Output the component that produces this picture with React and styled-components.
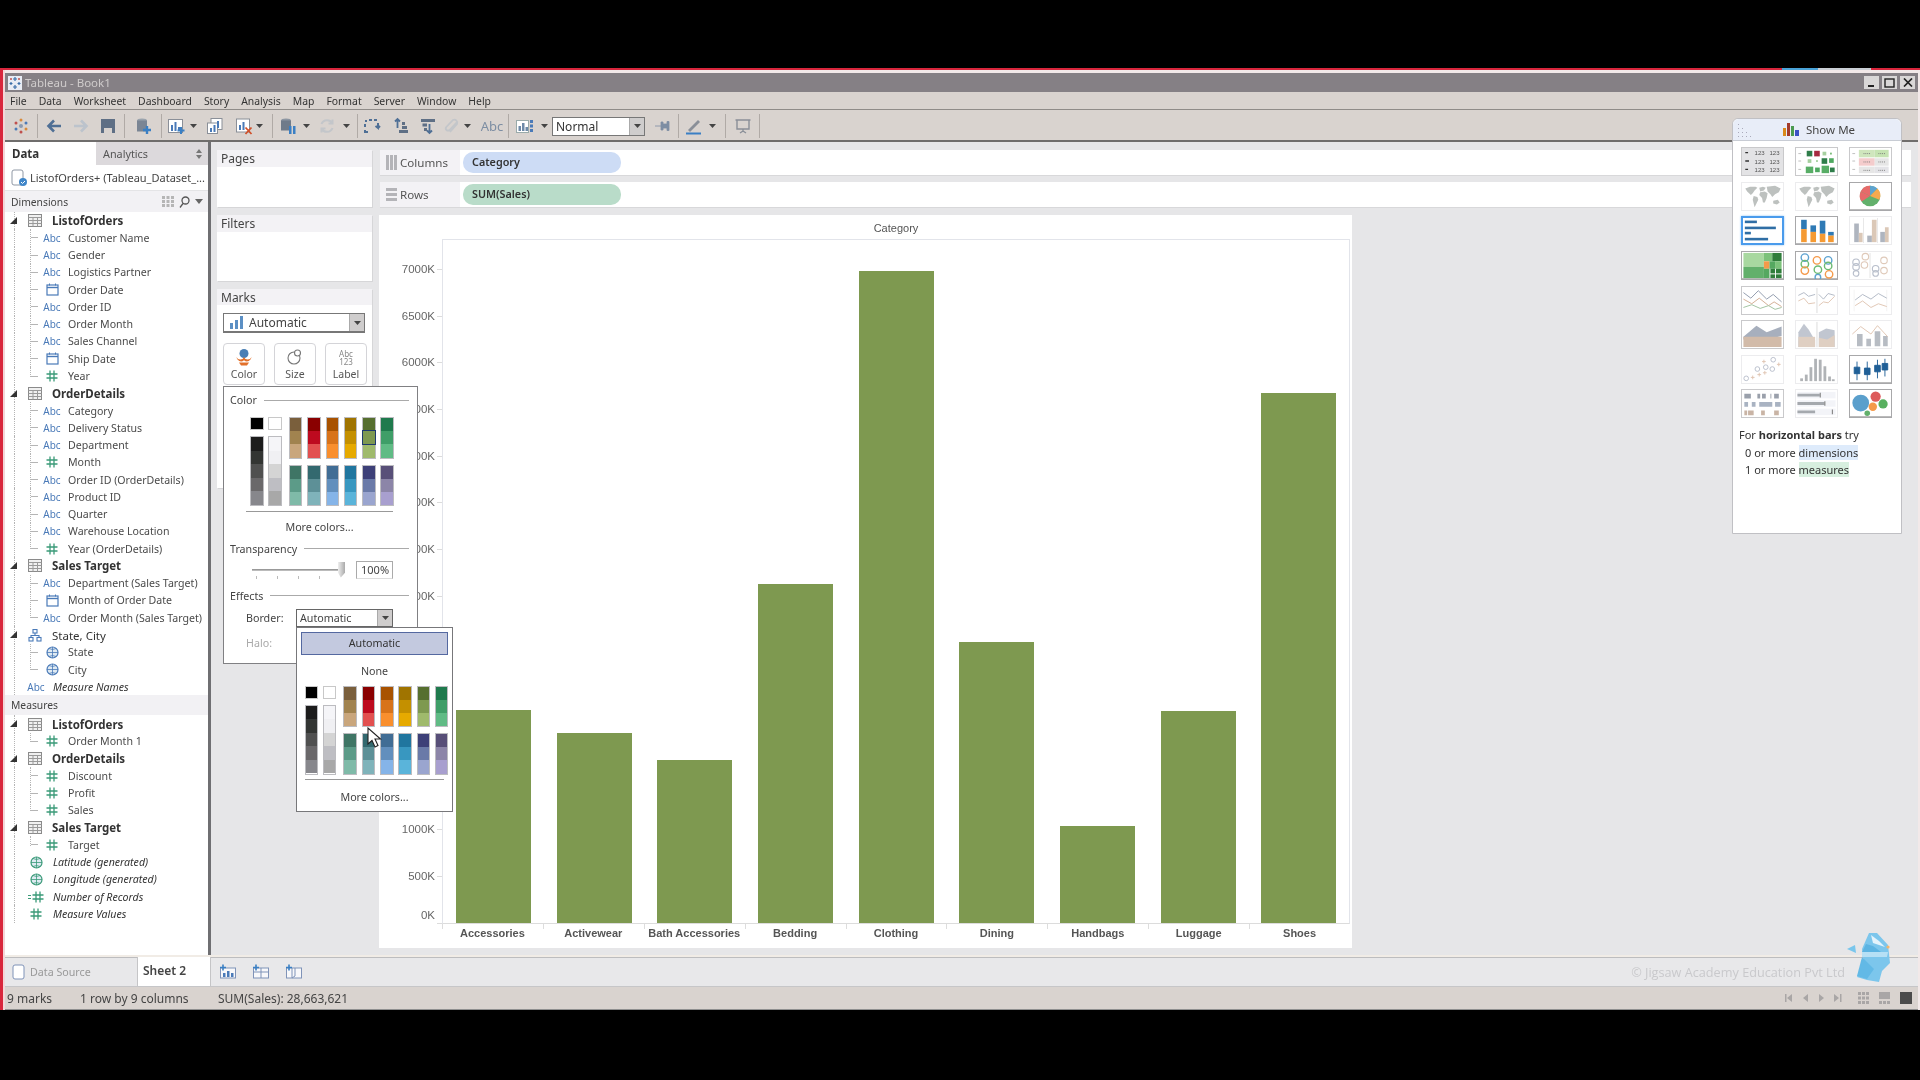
import styled, { createGlobalStyle } from "styled-components";

const GlobalStyle = createGlobalStyle`
  html, body { margin: 0; padding: 0; background: #000; }
  body { font-family: "Noto Sans", "Liberation Sans", sans-serif; color: #3c3c3c; }
  * { box-sizing: border-box; }
`;

const menus = ["File", "Data", "Worksheet", "Dashboard", "Story", "Analysis", "Map", "Format", "Server", "Window", "Help"];

const dimensions = [
  ["g", "table", "ListofOrders"],
  ["f", "abc", "Customer Name"],
  ["f", "abc", "Gender"],
  ["f", "abc", "Logistics Partner"],
  ["f", "date", "Order Date"],
  ["f", "abc", "Order ID"],
  ["f", "abc", "Order Month"],
  ["f", "abc", "Sales Channel"],
  ["f", "date", "Ship Date"],
  ["l", "hash", "Year"],
  ["g", "table", "OrderDetails"],
  ["f", "abc", "Category"],
  ["f", "abc", "Delivery Status"],
  ["f", "abc", "Department"],
  ["f", "hash", "Month"],
  ["f", "abc", "Order ID (OrderDetails)"],
  ["f", "abc", "Product ID"],
  ["f", "abc", "Quarter"],
  ["f", "abc", "Warehouse Location"],
  ["l", "hash", "Year (OrderDetails)"],
  ["g", "table", "Sales Target"],
  ["f", "abc", "Department (Sales Target)"],
  ["f", "date", "Month of Order Date"],
  ["l", "abc", "Order Month (Sales Target)"],
  ["h", "tree", "State, City"],
  ["f", "globe", "State"],
  ["l", "globe", "City"],
  ["t", "abc", "Measure Names"],
];

const measures = [
  ["g", "table", "ListofOrders"],
  ["l", "hash", "Order Month 1"],
  ["g", "table", "OrderDetails"],
  ["f", "hash", "Discount"],
  ["f", "hash", "Profit"],
  ["l", "hash", "Sales"],
  ["g", "table", "Sales Target"],
  ["l", "hash", "Target"],
  ["t", "globeGreen", "Latitude (generated)"],
  ["t", "globeGreen", "Longitude (generated)"],
  ["t", "hashEq", "Number of Records"],
  ["t", "hash", "Measure Values"],
];

const sales = [
  ["Accessories", 2280],
  ["Activewear", 2034],
  ["Bath Accessories", 1745],
  ["Bedding", 3630],
  ["Clothing", 6981],
  ["Dining", 3009],
  ["Handbags", 1039],
  ["Luggage", 2270],
  ["Shoes", 5675],
];

const ticks = [7000, 6500, 6000, 5500, 5000, 4500, 4000, 3500, 3000, 2500, 2000, 1500, 1000, 500, 0];

const paletteTop = [
  ["#7a5f3c", "#a1834f", "#c9a67c"],
  ["#8a0000", "#bd0a1f", "#e25050"],
  ["#a85200", "#d8731a", "#f98f2e"],
  ["#a07400", "#c49000", "#e6aa00"],
  ["#566f2f", "#7e9950", "#9fba6c"],
  ["#1f7a4d", "#3f9e68", "#60bb85"],
];
const paletteBottom = [
  ["#3f7565", "#5c9b88", "#7fbaa8"],
  ["#33696f", "#5d9097", "#7fb3ba"],
  ["#416d95", "#628fbd", "#85b4e8"],
  ["#20769f", "#3897c0", "#5ab4da"],
  ["#3d4078", "#6a7aa8", "#9aa5cf"],
  ["#584f78", "#8c85a8", "#a89fcf"],
];
const greyDark = ["#1c1c1c", "#333533", "#505050", "#6a686a", "#87878c"];
const greyLight = ["#f5f5f8", "#f0f0f3", "#d4d4d4", "#bebec3", "#a8a8a8"];

export default function App() {
  return (
    <Page>
      <GlobalStyle />
      <Window>
        <TitleBar>
          <AppLogo />
          <TitleText>Tableau - Book1</TitleText>
          <WinButtons>
            <WinButton>
              <svg width="9" height="9" viewBox="0 0 9 9"><rect x="1" y="7" width="6" height="2" fill="#222" /></svg>
            </WinButton>
            <WinButton>
              <svg width="11" height="10" viewBox="0 0 11 10"><rect x="1" y="1" width="9" height="8" fill="none" stroke="#222" strokeWidth="1.4" /></svg>
            </WinButton>
            <WinButton>
              <svg width="10" height="9" viewBox="0 0 10 9"><path d="M1 0.5l8 8M9 0.5l-8 8" stroke="#222" strokeWidth="1.7" /></svg>
            </WinButton>
          </WinButtons>
        </TitleBar>
        <MenuBar>
          {menus.map((m) => (
            <span key={m}>{m}</span>
          ))}
        </MenuBar>
        <Toolbar />
        <Main>
          <SidePanel />
          <Workspace>
            <CardsColumn>
              <Card $h={57}>
                <CardTitle>Pages</CardTitle>
              </Card>
              <Card $h={66}>
                <CardTitle>Filters</CardTitle>
              </Card>
              <MarksCard />
            </CardsColumn>
            <ViewColumn>
              <Shelf>
                <ShelfLabel>
                  <ColumnsGlyph />
                  Columns
                </ShelfLabel>
                <Pill $c="#cddcf5">Category</Pill>
              </Shelf>
              <Shelf>
                <ShelfLabel>
                  <RowsGlyph />
                  Rows
                </ShelfLabel>
                <Pill $c="#b9dcc9">SUM(Sales)</Pill>
              </Shelf>
              <Chart />
            </ViewColumn>
          </Workspace>
        </Main>
        <TabsBar>
          <SourceTab>
            <svg width="13" height="16" viewBox="0 0 13 16"><rect x="1" y="1" width="11" height="14" rx="2" fill="#fff" stroke="#7f93b8" /></svg>
            Data Source
          </SourceTab>
          <SheetTab>Sheet 2</SheetTab>
          <NewSheetIcons>
            <NewSheet kind="chart" />
            <NewSheet kind="dash" />
            <NewSheet kind="story" />
          </NewSheetIcons>
          <Watermark>© Jigsaw Academy Education Pvt Ltd</Watermark>
        </TabsBar>
        <StatusBar>
          <StatusText $w={73}>9 marks</StatusText>
          <StatusText $w={138}>1 row by 9 columns</StatusText>
          <StatusText $w={200}>SUM(Sales): 28,663,621</StatusText>
          <StatusRight>
            <NavIcons width="58" height="12" viewBox="0 0 58 12" fill="#a9a6a6">
              <path d="M1 2h1.500v8H1zM8 2v8L3 6zM24 2v8l-5-4zM35 2v8l5-4zM50 2v8l5-4zM56 2h1.500v8H56z" />
            </NavIcons>
            <svg width="11" height="12" viewBox="0 0 11 12" fill="#a9a6a6">
              <path d="M0 0h3v3H0zM4 0h3v3H4zM8 0h3v3H8zM0 4.500h3v3H0zM4 4.500h3v3H4zM8 4.500h3v3H8zM0 9h3v3H0zM4 9h3v3H4zM8 9h3v3H8z" />
            </svg>
            <svg width="11" height="12" viewBox="0 0 11 12" fill="#a9a6a6">
              <path d="M0 0h11v7H0zM0 9h3v3H0zM4 9h3v3H4zM8 9h3v3H8z" />
            </svg>
            <svg width="12" height="12" viewBox="0 0 12 12"><rect width="12" height="12" fill="#4b4b4b" /></svg>
          </StatusRight>
        </StatusBar>
        <ShowMe />
        <JigsawLogo />
      </Window>
    </Page>
  );
}

function AppLogo() {
  return (
    <svg width="14" height="14" viewBox="0 0 14 14">
      <rect width="14" height="14" fill="#e8ecf4" />
      <path d="M7 1v4M5 3h4M3 6v3M1.500 7.500h3M11 6v3M9.500 7.500h3M7 9v4M5 11h4" stroke="#3a6ea8" strokeWidth="1.200" />
      <path d="M3 2v2M2 3h2M11 2v2M10 3h2" stroke="#c0504d" strokeWidth="1" />
    </svg>
  );
}

function Caret() {
  return (
    <svg width="7" height="4" viewBox="0 0 7 4">
      <path d="M0 0h7L3.500 4z" fill="#444" />
    </svg>
  );
}

const toolIcons = {
  logo: (
    <g>
      <circle cx="9" cy="3" r="1.500" fill="#d98a3a" />
      <circle cx="4" cy="6" r="1.500" fill="#c0504d" />
      <circle cx="14" cy="6" r="1.500" fill="#4a7ab8" />
      <circle cx="4" cy="12" r="1.500" fill="#4a7ab8" />
      <circle cx="14" cy="12" r="1.500" fill="#d98a3a" />
      <circle cx="9" cy="15" r="1.500" fill="#c0504d" />
      <circle cx="9" cy="9" r="2" fill="#8a9ab0" />
    </g>
  ),
  back: <path d="M16 9H5M9 3.500L3.500 9 9 14.500" fill="none" stroke="#4f6f95" strokeWidth="2.600" />,
  forward: <path d="M2 9h11M9 3.500L14.500 9 9 14.500" fill="none" stroke="#bcc3cc" strokeWidth="2.600" />,
  save: <path d="M2 2h14v14H2zM5 11h8v5H5z" fill="#5f6f85" fillRule="evenodd" />,
  dataPlus: (
    <g>
      <ellipse cx="8" cy="3.500" rx="5" ry="2" fill="#9aa3ad" />
      <rect x="3" y="3.500" width="10" height="11" fill="#7a8594" />
      <path d="M13 9v8M9 13h8" stroke="#3a7fc4" strokeWidth="2.400" />
    </g>
  ),
  sheetPlus: (
    <g>
      <rect x="1.500" y="2.500" width="14" height="13" fill="#fff" stroke="#8a8f98" />
      <path d="M4 14V8h2v6zM7.500 14V5h2v9zM11 14v-4h2v4z" fill="#4a7ab8" />
      <path d="M14 10v7M10.500 13.500h7" stroke="#3a7fc4" strokeWidth="2" />
    </g>
  ),
  dup: (
    <g>
      <rect x="5" y="1.500" width="11" height="11" fill="#fff" stroke="#8a8f98" />
      <rect x="1.500" y="6" width="10" height="10.500" fill="#fff" stroke="#8a8f98" />
      <path d="M4 15v-4h2v4zM7.500 15V8h2v7zM11 11V4h2v7z" fill="#4a7ab8" />
    </g>
  ),
  clear: (
    <g>
      <rect x="1.500" y="2" width="13" height="13" fill="#fff" stroke="#8a8f98" />
      <path d="M4 13V8h2v5zM7.500 13V5h2v8z" fill="#4a7ab8" />
      <path d="M10.500 10.500l6 6.500M16.500 10.500l-6 6.500" stroke="#d0502a" strokeWidth="1.800" />
    </g>
  ),
  pause: (
    <g>
      <ellipse cx="7" cy="3.500" rx="5" ry="2" fill="#8d96a2" />
      <rect x="2" y="3.500" width="10" height="10" fill="#6f7b8a" />
      <path d="M10 9h2.500v8H10zM14 9h2.500v8H14z" fill="#3a7fc4" />
    </g>
  ),
  refresh: (
    <path d="M14.500 6.500A6 6 0 0 0 3.500 7M3.500 11.500A6 6 0 0 0 14.500 11M14.500 2.500v4h-4M3.500 15.500v-4h4" fill="none" stroke="#c3c6ca" strokeWidth="2" />
  ),
  swap: (
    <g fill="none" stroke="#4f6f95" strokeWidth="2">
      <path d="M2 4h2M6 3h3M11 3h3M2 7v3M2 13v2h3M15 6v5l-2.500-2M15 11l2-2" />
    </g>
  ),
  sortA: (
    <g>
      <path d="M4.500 2v9M2 4.500L4.500 2 7 4.500" fill="none" stroke="#4f6f95" strokeWidth="1.800" />
      <path d="M9 5h3v3H9zM9 9h5v3H9zM6 13h9v3H6z" fill="#5f6f85" />
    </g>
  ),
  sortD: (
    <g>
      <path d="M10.500 16V7M8 13.500l2.500 2.500 2.500-2.500" fill="none" stroke="#4f6f95" strokeWidth="1.800" />
      <path d="M2 2h14v3H2zM3.500 6.500H8v3H3.500zM5 11h3v3H5z" fill="#5f6f85" />
    </g>
  ),
  clip: (
    <path d="M15 5l-7.500 8a2.200 2.200 0 0 1-3.200-3L11 3a3 3 0 0 1 4 4l-7 8" fill="none" stroke="#c3c6ca" strokeWidth="1.800" />
  ),
  cards: (
    <g>
      <rect x="0.500" y="3.500" width="12" height="12" fill="#fff" stroke="#9aa" />
      <path d="M2.500 14V9H5v5zM6 14V6h2.500v8zM9.500 14v-4H12v4z" fill="#6d89a8" />
      <path d="M14 3h3v3h-3zM14 7.500h3v3h-3zM14 12h3v3h-3z" fill="#4a7ab8" />
    </g>
  ),
  pin: <path d="M2 9h6M8 5h2v8H8zM10 7h4v4h-4zM14 4.500h2v9h-2z" fill="#7d8ea3" stroke="#7d8ea3" strokeWidth="0.800" />,
  pen: (
    <g>
      <path d="M3 13L13 3l2 2L5 15z" fill="#8a8f98" />
      <path d="M1 16.500h15" stroke="#3a7fc4" strokeWidth="2" />
    </g>
  ),
  present: (
    <g fill="none" stroke="#8a8f98" strokeWidth="1.400">
      <path d="M1.500 3h15M3 3v9h12V3" />
      <path d="M9 12v2M6 16l3-2 3 2" />
    </g>
  ),
};

const toolbarItems = [
  ["logo", 32], ["sep"], ["back", 32], ["forward", 22], ["save", 32], ["sep"], ["dataPlus", 36], ["sep"],
  ["sheetPlus", 28], ["caret", 8], ["dup", 34], ["clear", 24], ["caret", 16], ["sep"],
  ["pause", 30], ["caret", 8], ["refresh", 32], ["caret", 14], ["sep"],
  ["swap", 28], ["sortA", 32], ["sortD", 20], ["clip", 26], ["caret", 12], ["abc", 32], ["sep"],
  ["cards", 32], ["caret", 8],
];

function ToolButton({ name, w }) {
  return (
    <ToolSlot $w={w}>
      <svg width="18" height="18" viewBox="0 0 18 18">{toolIcons[name]}</svg>
    </ToolSlot>
  );
}

function Toolbar() {
  return (
    <ToolbarRow>
      {toolbarItems.map(([name, w], i) => {
        if (name === "sep") return <ToolSep key={i} />;
        if (name === "caret")
          return (
            <CaretSlot key={i} $w={w}>
              <Caret />
            </CaretSlot>
          );
        if (name === "abc")
          return (
            <ToolSlot key={i} $w={w}>
              <AbcTool>Abc</AbcTool>
            </ToolSlot>
          );
        return <ToolButton key={i} name={name} w={w} />;
      })}
      <ToolSelect>
        Normal
        <SelectArrow $w={15}>
          <Caret />
        </SelectArrow>
      </ToolSelect>
      <ToolButton name="pin" w={33} />
      <ToolSep />
      <ToolButton name="pen" w={30} />
      <CaretSlot $w={16}>
        <Caret />
      </CaretSlot>
      <ToolSep />
      <ToolButton name="present" w={33} />
      <ToolSep />
    </ToolbarRow>
  );
}

function FieldIcon({ kind }) {
  if (kind === "abc") return <AbcIcon>Abc</AbcIcon>;
  if (kind === "table")
    return (
      <svg width="14" height="13" viewBox="0 0 14 13">
        <rect x="0.500" y="0.500" width="13" height="12" fill="#f0f0f0" stroke="#8a8a8a" />
        <path d="M0.500 3.500h13M0.500 6.500h13M0.500 9.500h13M5 3.500v9M9.500 3.500v9" stroke="#9a9a9a" />
      </svg>
    );
  if (kind === "date")
    return (
      <svg width="13" height="13" viewBox="0 0 13 13">
        <rect x="1" y="2" width="11" height="10" fill="#fff" stroke="#4a7ab8" strokeWidth="1.200" />
        <path d="M1 4.500h11" stroke="#4a7ab8" strokeWidth="1.400" />
        <path d="M3.500 0.500v2M9.500 0.500v2" stroke="#4a7ab8" />
      </svg>
    );
  if (kind === "hash" || kind === "hashEq")
    return (
      <svg width={kind === "hashEq" ? 16 : 12} height="12" viewBox={kind === "hashEq" ? "-4 0 16 12" : "0 0 12 12"}>
        <path d="M4 0.500v11M8 0.500v11M0.500 4h11M0.500 8h11" stroke="#3a9a78" strokeWidth="1.300" />
        {kind === "hashEq" && <path d="M-4 4.500h3M-4 7.500h3" stroke="#3a9a78" strokeWidth="1.200" />}
      </svg>
    );
  if (kind === "globe" || kind === "globeGreen") {
    const c = kind === "globe" ? "#4a7ab8" : "#3a9a78";
    return (
      <svg width="13" height="13" viewBox="0 0 13 13">
        <circle cx="6.500" cy="6.500" r="5.500" fill="#dfeaf2" stroke={c} strokeWidth="1.200" />
        <path d="M1 6.500h11M6.500 1v11M3 2.500q3.500 2 7 0M3 10.500q3.500-2 7 0" fill="none" stroke={c} strokeWidth="0.800" />
      </svg>
    );
  }
  return (
    <svg width="14" height="13" viewBox="0 0 14 13" fill="none" stroke="#4a7ab8" strokeWidth="1.100">
      <rect x="5" y="0.500" width="4" height="3.500" />
      <rect x="1" y="8.500" width="4" height="3.500" />
      <rect x="9" y="8.500" width="4" height="3.500" />
      <path d="M7 4v2.500H3v2M7 6.500h4v2" />
    </svg>
  );
}

function TreeRows({ rows }) {
  return rows.map(([type, icon, name], i) => {
    if (type === "g" || type === "h")
      return (
        <TreeRow key={i} $guide>
          <Twisty />
          <GroupIcon>
            <FieldIcon kind={icon} />
          </GroupIcon>
          <GroupName $plain={type === "h"}>{name}</GroupName>
        </TreeRow>
      );
    if (type === "t")
      return (
        <TreeRow key={i} $guide>
          <TopIcon>
            <FieldIcon kind={icon} />
          </TopIcon>
          <TopName>{name}</TopName>
        </TreeRow>
      );
    return (
      <FieldRow key={i} $last={type === "l"}>
        <ChildIcon>
          <FieldIcon kind={icon} />
        </ChildIcon>
        <span>{name}</span>
      </FieldRow>
    );
  });
}

function SidePanel() {
  return (
    <Side>
      <SideTabs>
        <DataTab>Data</DataTab>
        <AnalyticsTab>
          Analytics
          <svg width="6" height="10" viewBox="0 0 6 10" fill="#777">
            <path d="M3 0l3 4H0zM3 10L0 6h6z" />
          </svg>
        </AnalyticsTab>
      </SideTabs>
      <SourceRow>
        <svg width="17" height="18" viewBox="0 0 17 18">
          <rect x="1" y="1" width="11" height="15" rx="2" fill="#fff" stroke="#8f98a5" />
          <circle cx="12" cy="13" r="4" fill="#3f86c9" />
          <path d="M10 13l1.500 1.500L14 12" stroke="#fff" fill="none" />
        </svg>
        <SourceName>ListofOrders+ (Tableau_Dataset_...</SourceName>
      </SourceRow>
      <SectionHead $h={21}>
        Dimensions
        <SectionTools>
          <svg width="12" height="11" viewBox="0 0 12 11" fill="#b5b5b5">
            <path d="M0 0h3v3H0zM4.500 0h3v3h-3zM9 0h3v3H9zM0 4h3v3H0zM4.500 4h3v3h-3zM9 4h3v3H9zM0 8h3v3H0zM4.500 8h3v3h-3zM9 8h3v3H9z" />
          </svg>
          <svg width="11" height="12" viewBox="0 0 11 12" fill="none" stroke="#555" strokeWidth="1.300">
            <circle cx="6.500" cy="4.500" r="3.500" />
            <path d="M4 7.500L1 11.500" />
          </svg>
          <svg width="8" height="5" viewBox="0 0 8 5"><path d="M0 0h8L4 5z" fill="#666" /></svg>
        </SectionTools>
      </SectionHead>
      <TreeRows rows={dimensions} />
      <SectionHead $h={20}>Measures</SectionHead>
      <TreeRows rows={measures} />
    </Side>
  );
}

function PaletteColumn({ shades, selected }) {
  return (
    <Stripe>
      {shades.map((c, i) => (
        <Shade key={c} $c={c} $selected={selected === i} />
      ))}
    </Stripe>
  );
}

function Palette({ highlight }) {
  return (
    <PaletteWrap>
      <GreyPair>
        <GreyColumn>
          <Chip $c="#000" />
          <PaletteColumn shades={greyDark} />
        </GreyColumn>
        <GreyColumn>
          <Chip $c="#fff" />
          <PaletteColumn shades={greyLight} />
        </GreyColumn>
      </GreyPair>
      <ColorGrid>
        {paletteTop.map((s, i) => (
          <PaletteColumn key={i} shades={s} selected={highlight && i === 4 ? 1 : -1} />
        ))}
        {paletteBottom.map((s, i) => (
          <PaletteColumn key={i} shades={s} />
        ))}
      </ColorGrid>
    </PaletteWrap>
  );
}

function MarksCard() {
  return (
    <Card $h={199}>
      <CardTitle $tight>Marks</CardTitle>
      <MarkSelect>
        <svg width="14" height="13" viewBox="0 0 14 13" fill="#5b8fc4">
          <path d="M0 13V7h3v6zM5 13V4h3v9zM10 13V0h3v13z" />
        </svg>
        <MarkSelectText>Automatic</MarkSelectText>
        <SelectArrow $w={15}>
          <Caret />
        </SelectArrow>
      </MarkSelect>
      <MarkButtons>
        <MarkButton>
          <svg width="18" height="18" viewBox="0 0 18 18">
            <circle cx="9" cy="5.500" r="4.500" fill="#4a7fb5" />
            <path d="M1.500 9a4.500 4.500 0 0 0 7.500 3.300A4.500 4.500 0 0 0 16.500 9 4 4 0 0 1 9 9a4 4 0 0 1-7.500 0z" fill="#e2702a" />
            <path d="M4 14.500h10l-2 3H6z" fill="#e2702a" />
          </svg>
          Color
        </MarkButton>
        <MarkButton>
          <svg width="16" height="18" viewBox="0 0 16 18" fill="none" stroke="#777" strokeWidth="1.100">
            <circle cx="7" cy="10" r="6" />
            <circle cx="10.500" cy="5" r="3" fill="#fff" />
          </svg>
          Size
        </MarkButton>
        <MarkButton>
          <LabelGlyph>
            Abc
            <br />
            123
          </LabelGlyph>
          Label
        </MarkButton>
      </MarkButtons>
      <ColorPopup>
        <PopupHead>Color</PopupHead>
        <PaletteIndent>
          <Palette highlight />
        </PaletteIndent>
        <PopupRule $left={16} $right={16} $top={5} />
        <MoreColors $top={3.500}>More colors...</MoreColors>
        <PopupHead $top={4}>Transparency</PopupHead>
        <SliderRow>
          <SliderTrack>
            <SliderTicks>
              <i />
              <i />
              <i />
              <i />
            </SliderTicks>
            <SliderThumb />
          </SliderTrack>
          <PercentBox>100%</PercentBox>
        </SliderRow>
        <PopupHead $top={10}>Effects</PopupHead>
        <BorderRow>
          <BorderLabel>Border:</BorderLabel>
          <BorderSelect>
            Automatic
            <SelectArrow $w={15}>
              <Caret />
            </SelectArrow>
            <BorderPopup>
              <AutoChoice>Automatic</AutoChoice>
              <NoneChoice>None</NoneChoice>
              <BorderPaletteIndent>
                <Palette />
              </BorderPaletteIndent>
              <PopupRule $left={4} $right={4} $top={4} />
              <MoreColors $top={6}>More colors...</MoreColors>
              <CursorArrow width="15" height="22" viewBox="0 0 15 22">
                <path d="M1 1v16l4-3.500 3 6.500 3-1.500-3-6.500h5.500z" fill="#fff" stroke="#222" strokeWidth="1.100" />
              </CursorArrow>
            </BorderPopup>
          </BorderSelect>
        </BorderRow>
        <HaloRow>Halo:</HaloRow>
      </ColorPopup>
    </Card>
  );
}

function Chart() {
  const pxPerK = 654 / 7000;
  return (
    <ChartCard>
      <ChartHead>Category</ChartHead>
      <Axis>
        {ticks.map((t) => (
          <AxisTick key={t} $zero={t === 0}>
            <span>{t}K</span>
          </AxisTick>
        ))}
      </Axis>
      <Plot>
        {sales.map(([name, value]) => (
          <BarCell key={name}>
            <Bar style={{ height: value * pxPerK }} />
          </BarCell>
        ))}
      </Plot>
      <span />
      <XLabels>
        {sales.map(([name]) => (
          <XLabel key={name}>{name}</XLabel>
        ))}
      </XLabels>
    </ChartCard>
  );
}

function ColumnsGlyph() {
  return (
    <svg width="11" height="15" viewBox="0 0 11 15" fill="#b4b4b8">
      <path d="M0 0h3v15H0zM4 0h3v15H4zM8 0h3v15H8z" />
    </svg>
  );
}

function RowsGlyph() {
  return (
    <svg width="11" height="14" viewBox="0 0 11 14" fill="#b4b4b8">
      <path d="M0 0h11v3H0zM0 5h11v3H0zM0 10h11v3H0z" />
    </svg>
  );
}

function NewSheet({ kind }) {
  return (
    <svg width="17" height="15" viewBox="0 0 17 15">
      <rect x="1.500" y="4" width="15" height="10" fill="#f8f8fa" stroke="#7f93b8" />
      {kind === "chart" && <path d="M4 13V9h2.500v4zM8 13V7h2.500v6zM12 13V9h2.500v4z" fill="#4a7ab8" />}
      {kind === "dash" && <path d="M1.500 8h15M9 4v10" stroke="#7f93b8" />}
      {kind === "story" && <path d="M7 4v10M7 14l3-2V4" fill="none" stroke="#7f93b8" />}
      <path d="M4 0.500v6M1 3.500h6" stroke="#3a7fc4" strokeWidth="1.600" />
    </svg>
  );
}

function JigsawLogo() {
  return (
    <LogoMark width="44" height="50" viewBox="0 0 44 50">
      <path d="M15 17l7-16h8l11 12 2 18-8 8-3 11-12-2-10-3 7-13z" fill="#7cc6ec" />
      <path d="M24 3l8 6 6 6-12-4z" fill="#e4f3fb" />
      <path d="M19 12l7 2 8 6-19 0z" fill="#5cb4e2" />
      <path d="M15 20h26l-1 5H15z" fill="#b6e0f5" />
      <path d="M15 25l12 12-7 10-10-3z" fill="#62b9e6" />
      <path d="M0 17l8-4 1 8z" fill="#79c6ec" />
      <circle cx="41" cy="15" r="1.600" fill="#f2b56b" />
    </LogoMark>
  );
}

const ThumbSvg = ({ children }) => (
  <svg width="100%" height="100%" viewBox="0 0 43 29">
    {children}
  </svg>
);

const worldMap = (
  <path d="M3 6l5-2 6 0 2 1-3 3-2 3-2 2-2-2-2-2zM12 14l4 1 1 3-2 4-2 4-1-4-1-4zM18 5l4-1 3 1-2 3-4 1zM19 10l5-1 3 2-1 5-2 5-2 0-1-5-3-3zM26 4l9-1 6 3-2 4-4 2-3 3-2-3-3-3zM33 19l5-1 2 3-3 2-4-1z" fill="#a2a8a5" />
);

const thumbs = [
  ["mid", <g key="a" fontSize="6.500" fontFamily="Liberation Sans" fill="#555">
    <path d="M3 5h3M3 14h4M3 23h3" stroke="#333" strokeWidth="1.500" />
    <text x="13" y="8">123</text><text x="29" y="8">123</text>
    <text x="13" y="17">123</text><text x="29" y="17">123</text>
    <text x="13" y="26">123</text><text x="29" y="26">123</text>
  </g>, "#e3e3e5"],
  ["mid", <g key="b">
    <path d="M2 6h3M2 14h3M2 23h3" stroke="#bbb" />
    <rect x="11" y="3" width="6" height="6" fill="#2f7d4a" /><rect x="19" y="3" width="6" height="6" fill="#a52a40" /><rect x="28" y="4" width="4" height="4" fill="#a6d09f" /><rect x="36" y="5" width="2" height="2" fill="#7cbc7c" />
    <rect x="12" y="12" width="4" height="4" fill="#a6d09f" /><rect x="21" y="13" width="2" height="2" fill="#a6d09f" /><rect x="27" y="11" width="6" height="6" fill="#2f7d4a" /><rect x="35" y="11" width="5" height="5" fill="#4ea860" />
    <rect x="10" y="20" width="8" height="7" fill="#58ad66" /><rect x="20" y="21" width="5" height="5" fill="#4ea860" /><rect x="27" y="19" width="8" height="8" fill="#58ad66" /><rect x="36" y="21" width="5" height="5" fill="#2f7d4a" />
  </g>],
  ["mid", <g key="c">
    <path d="M2 6h3M2 14h3M2 23h3" stroke="#bbb" />
    <rect x="9" y="2" width="17" height="8" fill="#cfe6bd" /><rect x="26" y="2" width="15" height="8" fill="#c5e3b2" />
    <rect x="9" y="11" width="17" height="8" fill="#f4cccc" /><rect x="26" y="11" width="15" height="8" fill="#e6e6e6" />
    <rect x="9" y="20" width="17" height="7" fill="#e6e6e6" /><rect x="26" y="20" width="15" height="7" fill="#e4e4e8" />
    <path d="M14 6h8M30 6h8M14 15h8M30 15h8M14 24h8M30 24h8" stroke="#7a7a7a" strokeDasharray="1 1" />
  </g>],
  ["off", <g key="d">{worldMap}</g>],
  ["off", <g key="e">{worldMap}</g>],
  ["on", <g key="f">
    <circle cx="21" cy="14" r="11" fill="#62b06b" />
    <path d="M21 14L11 9a11 11 0 0 1 10-6z" fill="#e66a6a" /><path d="M21 14L12 20a11 11 0 0 1-1-11z" fill="#e66a6a" />
    <path d="M21 14V3a11 11 0 0 1 8 3z" fill="#5ea3d0" /><path d="M21 14l8-8a11 11 0 0 1 2 12z" fill="#f5a94e" />
  </g>],
  ["sel", <g key="g" fill="#2f6ea5">
    <rect x="1" y="3" width="14" height="3" /><rect x="1" y="10" width="36" height="3" /><rect x="1" y="16" width="7" height="3" /><rect x="1" y="23" width="27" height="3" />
  </g>],
  ["on", <g key="h">
    <rect x="5" y="3" width="6" height="10" fill="#2f7ab5" /><rect x="5" y="13" width="6" height="14" fill="#f59a33" />
    <rect x="15" y="9" width="6" height="7" fill="#2f7ab5" /><rect x="15" y="16" width="6" height="11" fill="#f59a33" />
    <rect x="25" y="4" width="6" height="14" fill="#2f7ab5" /><rect x="25" y="18" width="6" height="9" fill="#f59a33" />
    <rect x="34" y="16" width="6" height="4" fill="#2f7ab5" /><rect x="34" y="20" width="6" height="7" fill="#f59a33" />
  </g>],
  ["off", <g key="i">
    <path d="M14 1v27M29 1v27" stroke="#ddd" />
    <rect x="4" y="7" width="5" height="20" fill="#8e96a4" /><rect x="9" y="17" width="4" height="10" fill="#cdb19a" />
    <rect x="18" y="20" width="5" height="7" fill="#8e96a4" /><rect x="23" y="3" width="5" height="24" fill="#cdb19a" />
    <rect x="32" y="16" width="5" height="11" fill="#8e96a4" /><rect x="37" y="11" width="4" height="16" fill="#cdb19a" />
  </g>],
  ["on", <g key="j">
    <rect x="1" y="1" width="22" height="15" fill="#a8d8a0" /><rect x="23" y="1" width="9" height="9" fill="#7cc27a" /><rect x="32" y="1" width="10" height="9" fill="#2f7d3a" />
    <rect x="23" y="10" width="6" height="8" fill="#f59a4a" /><rect x="29" y="10" width="6" height="8" fill="#55a860" /><rect x="35" y="10" width="7" height="8" fill="#7cc27a" />
    <rect x="1" y="16" width="22" height="12" fill="#62b06b" /><rect x="23" y="18" width="6" height="10" fill="#55a860" /><rect x="30" y="18" width="5" height="5" fill="#2f7d3a" /><rect x="36" y="18" width="6" height="5" fill="#2f7d3a" /><rect x="30" y="24" width="5" height="4" fill="#2f7d3a" /><rect x="36" y="24" width="6" height="4" fill="#2f7d3a" />
  </g>],
  ["on", <g key="k" fill="none" strokeWidth="1.500">
    <circle cx="9" cy="6" r="4" stroke="#5ea3d0" /><circle cx="22" cy="9" r="4" stroke="#f59a4a" /><circle cx="34" cy="9" r="4" stroke="#5ea3d0" />
    <circle cx="9" cy="13" r="4" stroke="#6dbb72" /><circle cx="9" cy="20" r="4" stroke="#f59a4a" /><circle cx="23" cy="19" r="4" stroke="#6dbb72" />
    <circle cx="34" cy="15" r="4" stroke="#6dbb72" /><circle cx="35" cy="24" r="4" stroke="#f59a4a" /><circle cx="23" cy="27" r="3" stroke="#5ea3d0" />
  </g>],
  ["off", <g key="l" fill="none" strokeWidth="1.200">
    <path d="M21 1v27" stroke="#ddd" />
    <circle cx="6" cy="11" r="3.500" stroke="#9aa3b5" /><circle cx="6" cy="16" r="3.500" stroke="#9aa3b5" /><circle cx="16" cy="5" r="3.500" stroke="#d2b39c" /><circle cx="15" cy="14" r="3.500" stroke="#d2b39c" /><circle cx="6" cy="23" r="3" stroke="#9aa3b5" />
    <circle cx="27" cy="18" r="3.500" stroke="#9aa3b5" /><circle cx="27" cy="23" r="3" stroke="#9aa3b5" /><circle cx="36" cy="9" r="3.500" stroke="#d2b39c" /><circle cx="36" cy="20" r="3.500" stroke="#d2b39c" />
  </g>],
  ["mid", <g key="m" fill="none" strokeWidth="1">
    <path d="M1 6l8 6 8-8 9 9 7-5 9 8" stroke="#8d98aa" /><path d="M1 13l9 5 8-6 10 8 6-4 8 5" stroke="#d2ab90" /><path d="M1 22l9-3 9 4 9-3 7 4 7-2" stroke="#9cbf9c" />
  </g>],
  ["off", <g key="n" fill="none" strokeWidth="1">
    <path d="M22 1v27" stroke="#ccc" />
    <path d="M2 9l6-3 5 4 7-2" stroke="#8d98aa" /><path d="M2 15l6-3 5 6 7-1" stroke="#d2ab90" />
    <path d="M24 8l5 5 5-6 7 2" stroke="#8d98aa" /><path d="M24 20l5-4 5 1 7-7" stroke="#d2ab90" />
  </g>],
  ["off", <g key="o" fill="none" strokeWidth="1">
    <path d="M4 3v23M39 3v23" stroke="#eee" /><path d="M5 14l8-6 9 5 8-6 9 5" stroke="#8d98aa" /><path d="M5 20l8-5 9 7 8-4 9 3" stroke="#d2ab90" />
  </g>],
  ["mid", <g key="p">
    <path d="M1 17L15 5 26 12 42 6v10L26 20H1z" fill="#a7afbd" /><path d="M1 17H42V28H1z" fill="#d2bba9" />
  </g>],
  ["off", <g key="q">
    <path d="M22 1v27" stroke="#ccc" />
    <path d="M2 12l6-9 5 6 7 12v7H2z" fill="#a7afbd" /><path d="M2 17h18v11H2z" fill="#d2bba9" />
    <path d="M24 12l8-4 9 2v18H24z" fill="#a7afbd" /><path d="M24 18l9 2 8-5v13H24z" fill="#d2bba9" />
  </g>],
  ["off", <g key="r">
    <path d="M7 14h6v13H7zM17 19h5v8h-5zM26 11h6v16h-6zM35 16h5v11h-5z" fill="#9aa0ab" /><path d="M2 14l9-8 11 8 7-9 11 12" fill="none" stroke="#d2ab90" />
  </g>],
  ["off", <g key="s" fill="none" stroke="#9aa3b5">
    <circle cx="4" cy="24" r="2.500" /><circle cx="16" cy="14" r="2.500" /><circle cx="25" cy="12" r="2.500" /><circle cx="32" cy="14" r="2.500" /><circle cx="33" cy="4" r="2.500" />
    <path d="M9 23h4M11 21v4M16 20h4M18 18v4M22 18h4M24 16v4M21 6h4M23 4v4M37 9h4M39 7v4" stroke="#d2ab90" />
  </g>],
  ["off", <g key="t" fill="#8f9398">
    <rect x="4" y="24" width="3" height="3" /><rect x="9" y="20" width="3" height="7" /><rect x="14" y="12" width="3" height="15" /><rect x="19" y="3" width="3" height="24" /><rect x="24" y="4" width="3" height="23" /><rect x="29" y="11" width="3" height="16" /><rect x="34" y="22" width="3" height="5" /><rect x="38" y="25" width="3" height="2" />
  </g>],
  ["on", <g key="u" stroke="#1f5f97" fill="#1f5f97">
    <path d="M7 6v20M18 6v20M29 4v20M37 3v19" strokeWidth="1" />
    <path d="M4 12h6v7H4zM15 13h6v7h-6zM26 10h6v7h-6zM34 8h6v7h-6z" />
  </g>],
  ["mid", <g key="v">
    <path d="M2 4h7v5H2zM16 4h3v5h-3zM21 4h4v5h-4zM30 4h1v5h-1zM34 4h5v5h-5z" fill="#9aa0ab" />
    <path d="M2 13h4v5H2zM10 13h4v5h-4zM18 13h14v5H18zM35 13h6v5h-6z" fill="#a9b3c2" />
    <path d="M2 22h3v5H2zM6 22h6v5H6zM20 22h4v5h-4zM34 22h5v5h-5z" fill="#c9b4a5" />
  </g>],
  ["off", <g key="w">
    <rect x="1" y="2" width="41" height="7" fill="#eef0f6" /><rect x="1" y="11" width="41" height="7" fill="#eef0f6" /><rect x="1" y="20" width="41" height="7" fill="#eef0f6" />
    <path d="M1 4h24v3H1zM1 13h29v3H1zM1 22h19v3H1z" fill="#80858c" /><path d="M25 3h1v5h-1zM30 12h1v5h-1zM38 21h1v5h-1z" fill="#333" />
  </g>],
  ["on", <g key="x">
    <circle cx="11" cy="14" r="9" fill="#5a9fcc" /><circle cx="27" cy="7" r="5.500" fill="#dd5a5a" /><circle cx="24" cy="18" r="4.500" fill="#f59a4a" /><circle cx="35" cy="15" r="5" fill="#58b060" /><circle cx="18" cy="25" r="3" fill="#62b06b" />
  </g>],
];

function ShowMe() {
  return (
    <ShowMePanel>
      <ShowMeHead>
        <Grip>
          <svg width="16" height="16" viewBox="0 0 16 16" fill="#aab">
            <path d="M1 1h1v1H1zM1 5h1v1H1zM5 5h1v1H5zM1 9h1v1H1zM5 9h1v1H5zM9 9h1v1H9zM1 13h1v1H1zM5 13h1v1H5zM9 13h1v1H9zM13 13h1v1h-1z" />
          </svg>
        </Grip>
        <svg width="17" height="13" viewBox="0 0 17 13">
          <path d="M0 13V5h3v8z" fill="#d98a1a" />
          <path d="M4 13V0h3v13z" fill="#a33a2a" />
          <path d="M8 13V3h3v10z" fill="#4a9a50" />
          <path d="M12 13V7h4v6z" fill="#3a50c4" />
        </svg>
        <span>Show Me</span>
      </ShowMeHead>
      <ThumbGrid>
        {thumbs.map(([state, art, bg], i) => (
          <Thumb key={i} $state={state} $bg={bg}>
            <ThumbSvg>{art}</ThumbSvg>
          </Thumb>
        ))}
      </ThumbGrid>
      <ShowMeHint>
        <p>
          For <b>horizontal bars</b> try
        </p>
        <HintLine>
          0 or more <Tag $c="#deebfb">dimensions</Tag>
        </HintLine>
        <HintLine>
          1 or more <Tag $c="#d7efdf">measures</Tag>
        </HintLine>
      </ShowMeHint>
    </ShowMePanel>
  );
}

const Page = styled.div`
  width: 1920px;
  height: 1080px;
  padding: 68px 0 70px;
  background: #000;
  overflow: hidden;
  filter: blur(0.55px);
`;

const Window = styled.div`
  position: relative;
  width: 1920px;
  height: 942px;
  display: flex;
  flex-direction: column;
  padding: 5px 2px 0 5px;
  background:
    linear-gradient(90deg, #d8263c 0 1782px, #4aa3d8 1782px 1818px, #c9ced4 1818px 1871px, #d8263c 1871px) top / 100% 2px no-repeat,
    linear-gradient(90deg, #d8263c 0 3px, #f2d6d8 3px 5px, #f2e9e9 5px) left / 100% 100% no-repeat;
`;

const TitleBar = styled.div`
  height: 19px;
  flex: none;
  display: flex;
  align-items: center;
  padding-left: 3px;
  background: #858085;
`;

const TitleText = styled.span`
  margin-left: 3px;
  font-size: 11.5px;
  color: #cfcbcb;
`;

const WinButtons = styled.div`
  margin-left: auto;
  display: flex;
  gap: 3px;
  padding-right: 3px;
`;

const WinButton = styled.div`
  width: 15px;
  height: 13px;
  background: #d9d7d7;
  display: flex;
  align-items: center;
  justify-content: center;
`;

const MenuBar = styled.div`
  height: 18px;
  flex: none;
  display: flex;
  align-items: center;
  gap: 12px;
  padding-left: 5px;
  font-size: 10.4px;
  color: #333;
  background: #d9d3cf;
  border-bottom: 1px solid #8f8b88;
`;

const ToolbarRow = styled.div`
  height: 32px;
  flex: none;
  display: flex;
  align-items: center;
  padding-top: 2px;
  background: #d9d3cf;
  border-bottom: 2px solid #6f6d6c;
`;

const ToolSlot = styled.div`
  width: ${(p) => p.$w}px;
  flex: none;
  display: flex;
  justify-content: center;
`;

const CaretSlot = styled.div`
  width: ${(p) => p.$w}px;
  flex: none;
  display: flex;
`;

const ToolSep = styled.div`
  width: 1px;
  height: 24px;
  flex: none;
  background: #b0aaa6;
`;

const AbcTool = styled.span`
  font-size: 13px;
  color: #7d8ea3;
`;

const ToolSelect = styled.div`
  width: 93px;
  height: 19px;
  margin-left: 3px;
  flex: none;
  display: flex;
  align-items: center;
  justify-content: space-between;
  padding-left: 3px;
  font-size: 12px;
  color: #333;
  background: #fff;
  border: 1px solid #777;
`;

const SelectArrow = styled.div`
  width: ${(p) => p.$w}px;
  align-self: stretch;
  display: flex;
  align-items: center;
  justify-content: center;
  background: #cfcdcd;
  border-left: 1px solid #aaa;
`;

const Main = styled.div`
  flex: 1;
  min-height: 0;
  display: flex;
`;

const Side = styled.div`
  width: 206px;
  flex: none;
  background: #fff;
  border-right: 3px solid #6f6f72;
  font-size: 10.6px;
`;

const SideTabs = styled.div`
  height: 23px;
  display: flex;
  font-size: 10.8px;
`;

const DataTab = styled.div`
  width: 91px;
  padding: 4px 0 0 7px;
  font-size: 11.5px;
  font-weight: 700;
  color: #333;
`;

const AnalyticsTab = styled.div`
  flex: 1;
  display: flex;
  align-items: center;
  justify-content: space-between;
  padding: 0 6px 0 7px;
  background: #dcd9dc;
  color: #555;
`;

const SourceRow = styled.div`
  height: 26px;
  display: flex;
  align-items: center;
  gap: 2px;
  padding-left: 6px;
  border-bottom: 1px solid #e4e4e6;
`;

const SourceName = styled.span`
  font-size: 11px;
  color: #444;
  white-space: nowrap;
`;

const SectionHead = styled.div`
  height: ${(p) => p.$h}px;
  display: flex;
  align-items: center;
  justify-content: space-between;
  padding: 0 5px 0 6px;
  background: #f2f1f4;
  font-size: 10.3px;
  color: #444;
`;

const SectionTools = styled.div`
  display: flex;
  align-items: center;
  gap: 5px;
`;

const TreeRow = styled.div`
  position: relative;
  height: 17.27px;
  display: flex;
  align-items: center;
  white-space: nowrap;
  ${(p) =>
    p.$guide &&
    `&::before {
      content: "";
      position: absolute;
      left: 9px;
      top: 0;
      bottom: 0;
      border-left: 1px dotted #b5b5b5;
    }`}
`;

const FieldRow = styled(TreeRow)`
  color: #4a4a4a;
  &::before {
    content: "";
    position: absolute;
    left: 25px;
    top: 0;
    bottom: ${(p) => (p.$last ? "8px" : "0")};
    border-left: 1px dotted #b5b5b5;
  }
  &::after {
    content: "";
    position: absolute;
    left: 9px;
    top: 0;
    bottom: 0;
    width: 24px;
    border-left: 1px dotted #b5b5b5;
    background: linear-gradient(#b5b5b5, #b5b5b5) 16px 50% / 7px 1px no-repeat;
  }
`;

const Twisty = styled.span`
  position: absolute;
  left: 5px;
  top: 5px;
  width: 0;
  height: 0;
  border-left: 7px solid transparent;
  border-bottom: 7px solid #333;
`;

const GroupIcon = styled.span`
  width: 16px;
  margin-left: 22px;
  display: flex;
  justify-content: center;
`;

const GroupName = styled.span`
  margin-left: 9px;
  font-size: 11.5px;
  font-weight: ${(p) => (p.$plain ? 400 : 700)};
  color: #333;
`;

const TopIcon = styled.span`
  width: 16px;
  margin-left: 23px;
  display: flex;
  justify-content: center;
  position: relative;
  z-index: 1;
  background: #fff;
`;

const TopName = styled.span`
  margin-left: 9px;
  font-style: italic;
  color: #333;
`;

const ChildIcon = styled.span`
  width: 16px;
  margin-left: 39px;
  margin-right: 8px;
  display: flex;
  justify-content: center;
  position: relative;
  z-index: 1;
`;

const AbcIcon = styled.span`
  font-size: 10px;
  line-height: 1;
  color: #4a7ab8;
`;

const Workspace = styled.div`
  flex: 1;
  min-width: 0;
  display: flex;
  gap: 8px;
  padding: 8px 7px 0 6px;
  background: #e6e6e8;
`;

const CardsColumn = styled.div`
  width: 155px;
  flex: none;
  display: flex;
  flex-direction: column;
  gap: 8px;
  position: relative;
  z-index: 2;
`;

const Card = styled.div`
  position: relative;
  height: ${(p) => p.$h}px;
  flex: none;
  background: #fff;
  box-shadow: 1px 1px 0 #d6d6d8;
`;

const CardTitle = styled.div`
  height: ${(p) => (p.$tight ? 16 : 17)}px;
  padding-left: 4px;
  font-size: 12px;
  line-height: 17px;
  color: #444;
  background: #f3f2f5;
`;

const MarkSelect = styled.div`
  position: absolute;
  left: 6px;
  top: 24px;
  width: 142px;
  height: 20px;
  display: flex;
  align-items: center;
  padding-left: 6px;
  border: 1px solid #777;
  border-width: 1px 1px 2px 1px;
  background: #fff;
  font-size: 12px;
  color: #444;
`;

const MarkSelectText = styled.span`
  margin-left: 5px;
  flex: 1;
`;

const MarkButtons = styled.div`
  position: absolute;
  left: 6px;
  top: 54px;
  display: flex;
  gap: 9px;
`;

const MarkButton = styled.div`
  width: 42px;
  height: 42px;
  display: flex;
  flex-direction: column;
  align-items: center;
  justify-content: flex-end;
  padding-bottom: 3px;
  gap: 1px;
  background: #fff;
  border: 1px solid #d4d4d8;
  border-radius: 4px;
  font-size: 10.5px;
  color: #555;
`;

const LabelGlyph = styled.span`
  font-size: 8px;
  line-height: 8px;
  text-align: center;
  color: #888;
`;

const ColorPopup = styled.div`
  position: absolute;
  left: 6px;
  top: 97px;
  width: 195px;
  height: 278px;
  padding: 6px 8px 0 6px;
  background: #fff;
  border: 1px solid #808083;
  font-size: 10.7px;
  color: #444;
`;

const PopupHead = styled.div`
  height: 14px;
  margin-top: ${(p) => p.$top || 0}px;
  display: flex;
  align-items: center;
  gap: 7px;
  line-height: 14px;
  &::after {
    content: "";
    flex: 1;
    height: 1px;
    background: #aaa;
  }
`;

const PaletteIndent = styled.div`
  margin: 10px 0 0 20px;
`;

const BorderPaletteIndent = styled.div`
  margin: 5px 0 0 3.500px;
`;

const PaletteWrap = styled.div`
  display: flex;
  gap: 7.200px;
`;

const GreyPair = styled.div`
  display: flex;
  gap: 4.800px;
`;

const GreyColumn = styled.div`
  width: 13.500px;
  height: 89px;
  display: flex;
  flex-direction: column;
  gap: 6px;
`;

const Chip = styled.div`
  height: 13px;
  flex: none;
  background: ${(p) => p.$c};
  border: 1px solid #c8c8c8;
`;

const ColorGrid = styled.div`
  display: grid;
  grid-template-columns: repeat(6, 13.500px);
  grid-template-rows: 41.500px 41.500px;
  column-gap: 4.800px;
  row-gap: 6px;
`;

const Stripe = styled.div`
  flex: 1;
  display: flex;
  flex-direction: column;
  border: 1px solid #bcbcc0;
`;

const Shade = styled.div`
  flex: 1;
  background: ${(p) => p.$c};
  ${(p) => p.$selected && "outline: 1.500px solid #1f3a6e; outline-offset: 0; z-index: 1;"}
`;

const PopupRule = styled.div`
  height: 1px;
  margin: ${(p) => p.$top}px ${(p) => p.$right}px 0 ${(p) => p.$left}px;
  background: #999;
`;

const MoreColors = styled.div`
  height: 22px;
  margin-top: ${(p) => p.$top}px;
  line-height: 22px;
  text-align: center;
  color: #444;
`;

const SliderRow = styled.div`
  height: 18px;
  margin: 5px 0 0 22px;
  display: flex;
  align-items: center;
  gap: 11px;
`;

const SliderTrack = styled.div`
  position: relative;
  width: 93px;
  height: 2px;
  background: linear-gradient(#888, #ccc);
`;

const SliderTicks = styled.div`
  position: absolute;
  left: 4px;
  top: 7px;
  display: flex;
  gap: 20px;
  i {
    width: 1px;
    height: 3px;
    background: #bbb;
  }
`;

const SliderThumb = styled.div`
  position: absolute;
  right: 0;
  top: -7px;
  width: 7px;
  height: 16px;
  background: linear-gradient(90deg, #eee, #aaa);
  clip-path: polygon(0 0, 100% 0, 100% 70%, 40% 100%, 0 70%);
`;

const PercentBox = styled.div`
  width: 37px;
  height: 18px;
  border: 1px solid #aaa;
  border-bottom-color: #ddd;
  font-size: 11px;
  line-height: 16px;
  padding-left: 4px;
  color: #444;
`;

const BorderRow = styled.div`
  height: 19px;
  margin: 6px 0 0 16px;
  display: flex;
  align-items: center;
`;

const BorderLabel = styled.span`
  width: 50px;
  flex: none;
`;

const BorderSelect = styled.div`
  position: relative;
  width: 97px;
  height: 19px;
  flex: none;
  display: flex;
  align-items: center;
  justify-content: space-between;
  padding-left: 3px;
  border: 1px solid #666;
  border-width: 1px 1px 2px 1px;
  background: #fff;
`;

const BorderPopup = styled.div`
  position: absolute;
  left: -1px;
  top: 17px;
  width: 157px;
  height: 185px;
  padding: 4px 4px 0;
  background: #fff;
  border: 1px solid #77777a;
  z-index: 3;
`;

const AutoChoice = styled.div`
  height: 23px;
  line-height: 21px;
  text-align: center;
  background: #c3c9df;
  border: 1px solid #5468a0;
  color: #333;
`;

const NoneChoice = styled.div`
  height: 20px;
  margin-top: 6px;
  line-height: 20px;
  text-align: center;
`;

const CursorArrow = styled.svg`
  position: absolute;
  left: 70px;
  top: 99px;
`;

const HaloRow = styled.div`
  margin: 6px 0 0 16px;
  height: 18px;
  line-height: 18px;
  color: #aaa;
`;

const ViewColumn = styled.div`
  flex: 1;
  min-width: 0;
  display: flex;
  flex-direction: column;
  gap: 7px;
`;

const Shelf = styled.div`
  height: 25px;
  flex: none;
  display: flex;
  align-items: center;
  background: #fff;
  box-shadow: 0 1px 0 #d8d8da;
`;

const ShelfLabel = styled.div`
  width: 80px;
  height: 100%;
  margin-right: 3px;
  display: flex;
  align-items: center;
  gap: 3px;
  padding-left: 6px;
  font-size: 11.6px;
  color: #555;
  background: #f3f2f5;
`;

const Pill = styled.div`
  width: 158px;
  height: 21px;
  padding-left: 9px;
  line-height: 20px;
  font-size: 10.8px;
  font-weight: 600;
  color: #333;
  background: ${(p) => p.$c};
  border-radius: 10px;
`;

const ChartCard = styled.div`
  width: 973px;
  height: 733px;
  margin: 1px 0 0 -1px;
  flex: none;
  display: grid;
  grid-template-columns: 63px 908px;
  grid-template-rows: 24px 685px 24px;
  background: #fff;
`;

const ChartHead = styled.div`
  grid-column: 2;
  text-align: center;
  font-family: "Liberation Sans", sans-serif;
  font-size: 11px;
  line-height: 26px;
  color: #555;
`;

const Axis = styled.div`
  grid-column: 1;
  grid-row: 2;
  padding-top: 6.650px;
  font-family: "Liberation Sans", sans-serif;
  font-size: 11.500px;
  color: #666;
`;

const AxisTick = styled.div`
  position: relative;
  height: 46.700px;
  display: flex;
  align-items: center;
  justify-content: flex-end;
  padding-right: 7px;
  span {
    position: relative;
    top: ${(p) => (p.$zero ? "-8px" : "0")};
  }
  &::after {
    content: "";
    position: absolute;
    right: 0;
    top: 50%;
    width: 5px;
    height: 1px;
    background: #dcdcdc;
  }
`;

const Plot = styled.div`
  grid-column: 2;
  grid-row: 2;
  display: flex;
  align-items: flex-end;
  border: 1px solid #e2e4ea;
  border-bottom-color: #dcdcdc;
`;

const BarCell = styled.div`
  flex: 1;
  display: flex;
  justify-content: center;
`;

const Bar = styled.div`
  width: 75px;
  background: #7e9950;
`;

const XLabels = styled.div`
  grid-column: 2;
  grid-row: 3;
  display: flex;
`;

const XLabel = styled.div`
  flex: 1;
  padding-top: 3px;
  text-align: center;
  white-space: nowrap;
  font-family: "Liberation Sans", sans-serif;
  font-size: 11px;
  font-weight: 700;
  color: #555;
  background: linear-gradient(#ddd, #ddd) left top / 1px 5px no-repeat;
`;

const TabsBar = styled.div`
  height: 31px;
  flex: none;
  display: flex;
  background: #e8e8ea;
  border-top: 2px solid #f1ece6;
  box-shadow: inset 0 1px 0 #bdbdbf;
`;

const SourceTab = styled.div`
  width: 133px;
  display: flex;
  align-items: center;
  gap: 5px;
  padding-left: 7px;
  font-size: 10.7px;
  color: #999;
  border-right: 1px solid #c5c5c7;
`;

const SheetTab = styled.div`
  width: 73px;
  padding-left: 5px;
  line-height: 28px;
  font-size: 12px;
  font-weight: 600;
  color: #444;
  background: #fff;
  border-right: 1px solid #c5c5c7;
`;

const NewSheetIcons = styled.div`
  display: flex;
  align-items: center;
  gap: 16px;
  padding-left: 8px;
`;

const Watermark = styled.div`
  margin-left: auto;
  padding-right: 73px;
  font-family: "Open Sans", sans-serif;
  font-size: 12.7px;
  line-height: 31px;
  color: #c9c9cc;
`;

const LogoMark = styled.svg`
  position: absolute;
  left: 1847px;
  top: 864px;
`;

const StatusBar = styled.div`
  height: 24px;
  flex: none;
  display: flex;
  align-items: center;
  padding-left: 2px;
  font-size: 12px;
  color: #444;
  background: #d9d3cf;
  border-top: 1px solid #c6c6c8;
  border-bottom: 1px solid #8f8f8f;
`;

const StatusText = styled.span`
  width: ${(p) => p.$w}px;
  flex: none;
  white-space: nowrap;
`;

const StatusRight = styled.div`
  margin-left: auto;
  display: flex;
  align-items: center;
  gap: 10px;
  padding-right: 6px;
`;

const NavIcons = styled.svg`
  margin-right: 6px;
`;

const Grip = styled.div`
  position: absolute;
  left: 4px;
  top: 4px;
`;

const ShowMePanel = styled.div`
  position: absolute;
  left: 1732px;
  top: 50px;
  width: 170px;
  height: 416px;
  display: flex;
  flex-direction: column;
  background: #fff;
  border: 1px solid #c0c0c4;
  border-radius: 6px 6px 0 0;
  z-index: 4;
`;

const ShowMeHead = styled.div`
  position: relative;
  height: 22px;
  flex: none;
  display: flex;
  align-items: center;
  justify-content: center;
  gap: 6px;
  padding-left: 4px;
  font-size: 11.500px;
  color: #444;
  background: #e8edf8;
  border-bottom: 1px solid #c8ccd4;
  border-radius: 6px 6px 0 0;
`;

const ThumbGrid = styled.div`
  display: grid;
  grid-template-columns: repeat(3, 43px);
  grid-auto-rows: 29px;
  column-gap: 11px;
  row-gap: 5.650px;
  padding: 6px 0 0 8px;
`;

const Thumb = styled.div`
  background: ${(p) => p.$bg || "#fff"};
  overflow: hidden;
  ${(p) => p.$state === "on" && "border: 1px solid #a8a8aa; box-shadow: inset 0 -1px 0 #bbb;"}
  ${(p) => p.$state === "mid" && "border: 1px solid #c9c9cb;"}
  ${(p) => p.$state === "off" && "border: 1px solid #ececee; svg { opacity: 0.7; }"}
  ${(p) => p.$state === "sel" && "border: 2px solid #4a9bec; box-shadow: 0 0 2px #8cc4f5;"}
`;

const ShowMeHint = styled.div`
  margin-top: 8px;
  padding-left: 6px;
  font-size: 11px;
  line-height: 17.500px;
  color: #333;
  p {
    margin: 0;
  }
`;

const HintLine = styled.div`
  padding-left: 6px;
`;

const Tag = styled.span`
  background: ${(p) => p.$c};
`;
